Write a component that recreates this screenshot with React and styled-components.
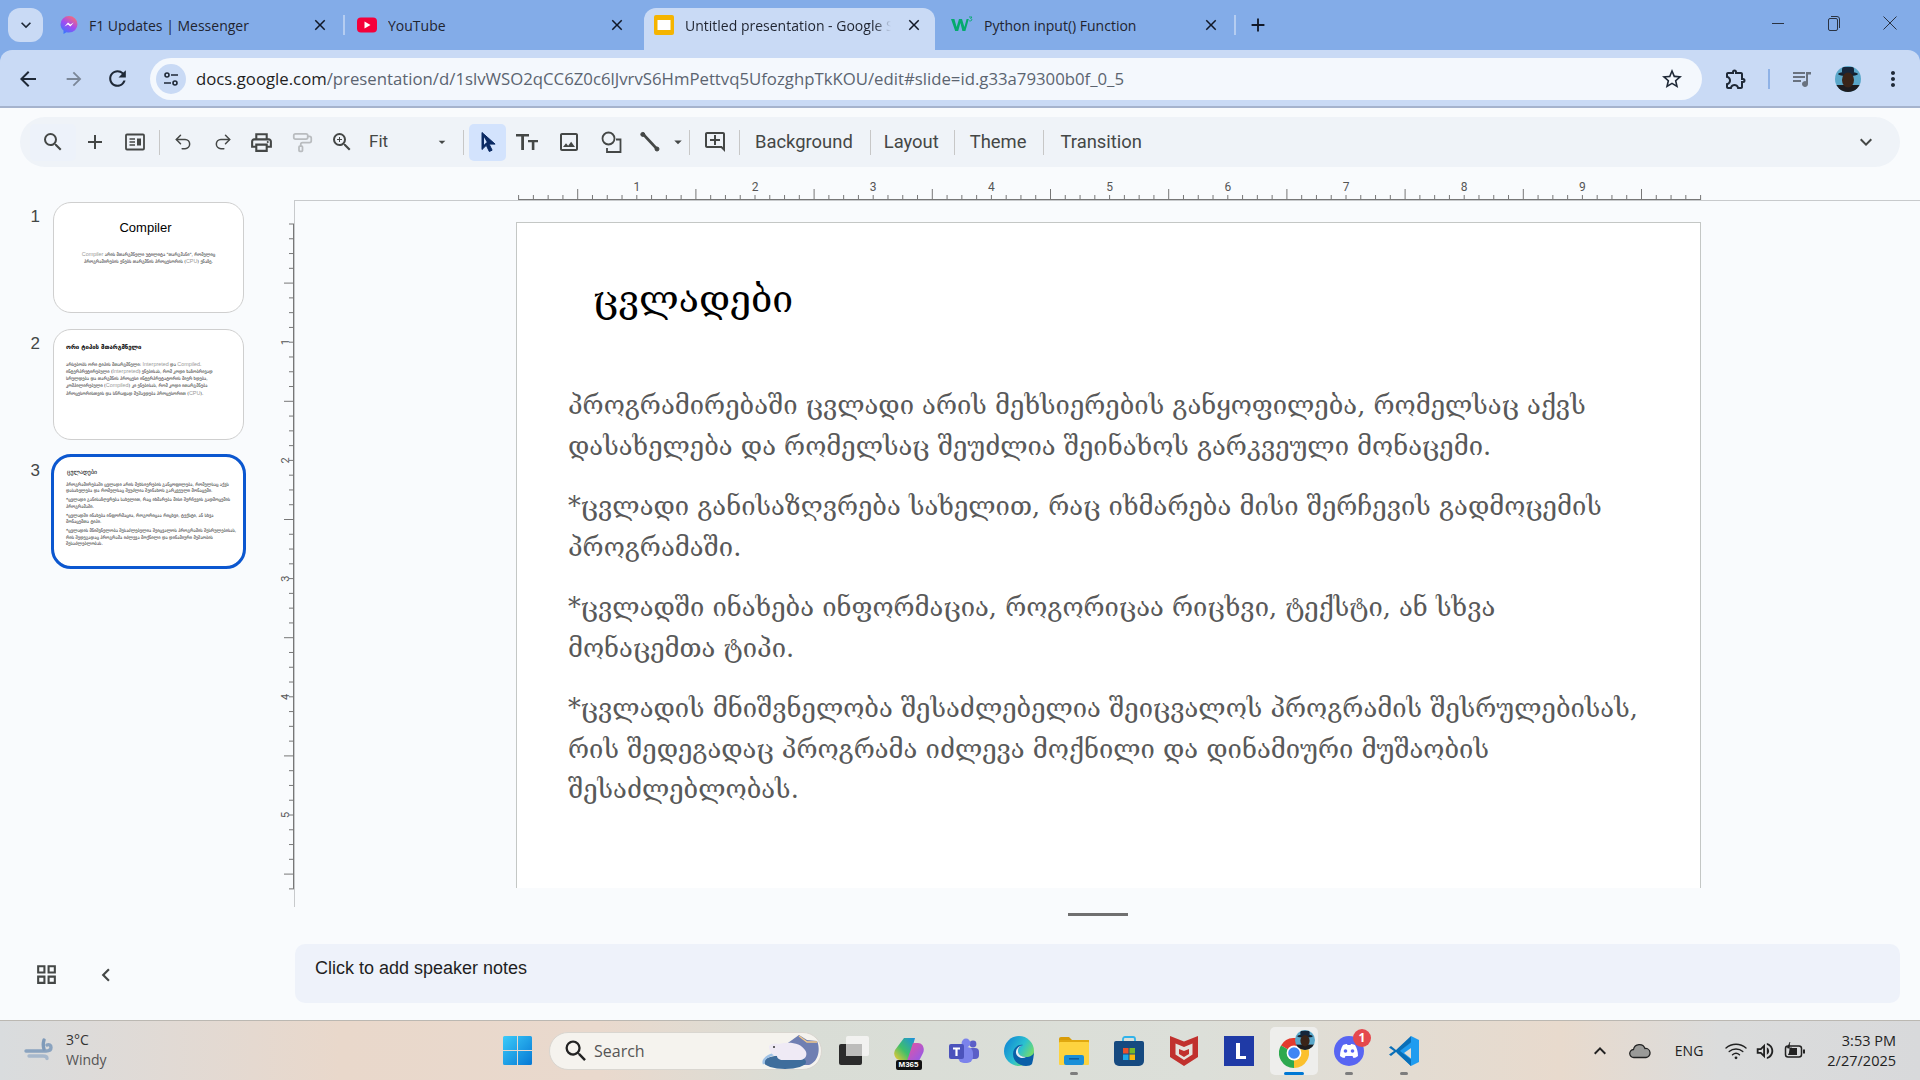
import React from 'react'
import styled, { createGlobalStyle } from 'styled-components'
import {
  MdSearch, MdAdd, MdZoomIn, MdOutlineImage, MdOutlinePrint,
  MdOutlineAddComment, MdExpandMore, MdOutlineGridView, MdChevronLeft, MdStarBorder,
  MdOutlineExtension, MdMoreVert, MdRefresh, MdArrowBack, MdArrowForward, MdArrowDropDown,
  MdClose, MdOutlineVolumeUp, MdKeyboardArrowUp,
} from 'react-icons/md'
import { Undo2, Redo2, PaintRoller } from 'lucide-react'

const UI = `"Open Sans", "Noto Sans", sans-serif`
const GEO = `"DejaVu Serif", "DejaVu Sans", serif`
const GEO_SMALL = `"DejaVu Sans", sans-serif`

const Global = createGlobalStyle`
  html, body { margin: 0; padding: 0; background: #f9fbfd; }
  body { font-family: ${UI}; overflow: hidden; }
  * { box-sizing: border-box; }
`

const Page = styled.div`
  width: 1920px;
  height: 1080px;
  display: flex;
  flex-direction: column;
  overflow: hidden;
`

/* chrome tabs */
const TabBar = styled.div`
  height: 50px;
  flex: none;
  background: #83ace8;
  display: flex;
  align-items: flex-end;
  padding-left: 8px;
`
const TabList = styled.div`
  width: 35px;
  height: 34px;
  margin: 0 7px 8px 0;
  border-radius: 12px;
  background: #c9daf5;
  display: flex;
  align-items: center;
  justify-content: center;
  color: #1f2937;
`
const TabSlot = styled.div`
  position: relative;
  width: 297px;
  height: 42px;
  padding-right: 6px;
  flex: none;
  &::after {
    content: '';
    display: ${p => (p.$sep ? 'block' : 'none')};
    position: absolute;
    right: 2px;
    top: 7px;
    width: 2px;
    height: 20px;
    background: #b5cdf1;
  }
`
const TabShape = styled.div`
  height: 100%;
  display: flex;
  align-items: center;
  padding: 0 9px 8px 10px;
  border-radius: 12px 12px 0 0;
  background: ${p => (p.$active ? '#c9daf5' : 'transparent')};
`
const TabTitle = styled.span`
  flex: 1;
  min-width: 0;
  margin-left: 11px;
  margin-right: ${p => (p.$fade ? 14 : 0)}px;
  font-size: 14px;
  color: #1f2430;
  white-space: nowrap;
  overflow: hidden;
  -webkit-mask-image: ${p => (p.$fade ? 'linear-gradient(90deg, #000 92%, transparent 100%)' : 'none')};
`
const TabClose = styled.span`
  display: flex;
  color: #111827;
  margin-right: 3px;
`
const NewTab = styled.div`
  margin: 0 0 8px 9px;
  height: 34px;
  display: flex;
  align-items: center;
  color: #111827;
`
const WinControls = styled.div`
  margin-left: auto;
  height: 50px;
  display: flex;
  align-items: center;
  align-self: flex-start;
  color: #2a3342;
  padding: 0 2px 4px 0;
`
const WinButton = styled.span`
  width: 56px;
  display: flex;
  justify-content: center;
`

/* address bar */
const AddressBar = styled.div`
  height: 58px;
  flex: none;
  background: #83ace8;
`
const AddressInner = styled.div`
  height: 100%;
  background: #c9daf5;
  border-radius: 12px 12px 0 0;
  border-bottom: 2px solid #a5b3cd;
  display: flex;
  align-items: center;
  padding-top: 1px;
`
const NavBtn = styled.span`
  width: ${p => p.$w || 44}px;
  margin-left: ${p => p.$ml || 0}px;
  display: flex;
  justify-content: center;
  color: ${p => p.$color || '#1f2937'};
  flex: none;
`
const UrlPill = styled.div`
  margin-left: 10px;
  width: 1552px;
  height: 42px;
  border-radius: 21px;
  background: #f4f8fd;
  display: flex;
  align-items: center;
  padding: 0 18px 0 6px;
  flex: none;
`
const SiteChip = styled.span`
  width: 30px;
  height: 30px;
  border-radius: 50%;
  background: #c9daf5;
  display: flex;
  align-items: center;
  justify-content: center;
  flex: none;
`
const UrlText = styled.span`
  margin-left: 10px;
  font-size: 16.76px;
  color: #5b6470;
  white-space: nowrap;
  flex: 1;
  b { font-weight: 400; color: #1f1f1f; }
`
const AddrSep = styled.span`
  width: 2px;
  height: 20px;
  background: #8fb2e6;
  margin: 0 8px;
  flex: none;
`

/* docs toolbar */
const ToolbarWrap = styled.div`
  flex: none;
  padding: 9px 20px 0;
  background: #f9fbfd;
`
const Toolbar = styled.div`
  height: 50px;
  border-radius: 25px;
  background: #eff3f8;
  display: flex;
  align-items: center;
  padding-left: 10px;
  padding-right: 21px;
  color: #444746;
`
const ToolBtn = styled.span`
  width: ${p => p.$w || 40}px;
  height: 37px;
  margin-left: ${p => p.$ml || 0}px;
  flex: none;
  display: flex;
  align-items: center;
  justify-content: center;
  border-radius: 5px;
  color: ${p => p.$color || '#444746'};
  background: ${p => p.$bg || 'transparent'};
`
const ToolSep = styled.span`
  width: 1px;
  height: 25px;
  background: #c7c7c7;
  flex: none;
  margin: 0 ${p => p.$m ?? 4}px;
`
const ZoomLabel = styled.span`
  width: 73px;
  padding: 0 0 2px 8px;
  font-size: 17px;
  font-family: Roboto, ${UI};
  flex: none;
`
const TextBtn = styled.span`
  font-family: Roboto, ${UI};
  font-size: 18.4px;
  padding: 0 ${p => p.$r || 15}px 2px ${p => p.$l || 15}px;
  color: #444746;
  flex: none;
`
const Push = styled.span`
  flex: 1;
`

/* editor */
const Editor = styled.div`
  flex: 1;
  min-height: 0;
  display: grid;
  grid-template-columns: 280px 1fr;
  background: #f9fbfd;
`
const Filmstrip = styled.div`
  display: flex;
  flex-direction: column;
  padding-top: 35px;
`
const ThumbRow = styled.div`
  display: flex;
  height: 111px;
  margin-bottom: ${p => (p.$last ? 0 : 16)}px;
`
const ThumbNum = styled.span`
  width: 40px;
  text-align: right;
  font: 17px "Liberation Sans", sans-serif;
  color: #444746;
  margin-top: 5px;
`
const Thumb = styled.div`
  margin-left: 13px;
  width: 191px;
  height: 111px;
  border-radius: 18px;
  background: #fff;
  border: 1px solid #cfcfcf;
  overflow: hidden;
  outline: ${p => (p.$active ? '3px solid #0b57d0' : 'none')};
  outline-offset: -1px;
  padding: ${p => p.$pad || '11px 12px'};
`
const ThumbTitle = styled.div`
  font-family: ${p => (p.$latin ? '"Liberation Sans"' : GEO_SMALL)}, sans-serif;
  font-size: ${p => p.$size || 6}px;
  font-weight: ${p => p.$weight || 400};
  color: #000;
  text-align: ${p => (p.$center ? 'center' : 'left')};
  line-height: ${p => p.$lh || 12}px;
  margin: ${p => p.$m || '0 0 8px 0'};
  white-space: nowrap;
`
const ThumbLine = styled.div`
  font-family: ${GEO_SMALL};
  font-size: 4.4px;
  line-height: 6.4px;
  color: #222;
  white-space: nowrap;
  text-align: ${p => (p.$center ? 'center' : 'left')};
  margin-bottom: ${p => p.$mb || 0}px;
  i { font-style: normal; font-family: "Liberation Sans", sans-serif; font-size: 5.4px; color: #999; }
`
const FilmFooter = styled.div`
  margin-top: auto;
  height: 94px;
  display: flex;
  align-items: flex-start;
  padding: 36px 0 0 34px;
  color: #444746;
  gap: 34px;
`

const MainCol = styled.div`
  display: flex;
  flex-direction: column;
  min-width: 0;
`
const CanvasGrid = styled.div`
  display: grid;
  grid-template-columns: 14px 1fr;
  grid-template-rows: 33px 707px;
`
const Canvas = styled.div`
  border-top: 1.5px solid #c8cacc;
  border-left: 1.5px solid #c8cacc;
  padding: 21px 0 0 221px;
  overflow: hidden;
`
const Slide = styled.div`
  width: 1185px;
  height: 666px;
  background: #fff;
  border: 1.5px solid #c4c7c5;
  border-bottom: 0;
  overflow: hidden;
`
const SlideTitle = styled.h1`
  margin: 46px 0 56px 76px;
  font-family: ${GEO};
  font-weight: 400;
  font-size: 37.3px;
  line-height: 60px;
  color: #000;
`
const SlideBody = styled.div`
  margin-left: 51px;
  font-family: ${GEO};
  font-size: 25.6px;
  line-height: 40.5px;
  color: #595959;
`
const SlidePara = styled.p`
  margin: 0 0 20px;
  white-space: pre;
`
const NotesHandle = styled.div`
  width: 60px;
  height: 2.5px;
  margin: 6px auto 0;
  background: #707070;
  position: relative;
  left: -2px;
`
const Notes = styled.div`
  margin: 28px 20px 0 15px;
  height: 59px;
  border-radius: 10px;
  background: #eef2fa;
  padding: 12px 0 0 20px;
  font: 18px/24px "Liberation Sans", sans-serif;
  color: #1f1f1f;
`

/* taskbar */
const Taskbar = styled.div`
  flex: none;
  height: 60px;
  border-top: 1.5px solid #bbb8b2;
  background: linear-gradient(90deg, #d9dcde 0, #e9d8cb 340px, #e9d9cd 600px, #d9ddd6 800px, #dcdfd9 1200px, #e8dacd 1560px, #dbdcdc 1720px, #d8d9db 1920px);
  display: flex;
  align-items: center;
`
const Weather = styled.div`
  width: 503px;
  flex: none;
  display: flex;
  align-items: center;
  padding-left: 24px;
  gap: 10px;
  margin-top: -2px;
`
const WeatherText = styled.div`
  font-size: 14px;
  line-height: 20px;
  color: #333;
  span { display: block; color: #555; }
`
const SearchPill = styled.div`
  width: 273px;
  height: 38px;
  margin-left: 17px;
  flex: none;
  border-radius: 19px;
  background: #f5f3ee;
  border: 1px solid #d9d6d0;
  display: flex;
  align-items: center;
  padding-left: 12px;
  color: #555;
  font-size: 16px;
  gap: 4px;
`
const Bear = styled.svg`
  margin-left: auto;
`
const AppsRow = styled.div`
  display: flex;
  margin-left: 4px;
  flex: none;
`
const AppSlot = styled.div`
  width: 55px;
  height: 48px;
  display: flex;
  align-items: center;
  justify-content: center;
  position: relative;
  border-radius: 5px;
  &::before {
    content: '';
    display: ${p => (p.$focus ? 'block' : 'none')};
    position: absolute;
    left: 4px; right: 3px; top: 0; bottom: 0;
    background: #eeeeec;
    border-radius: 5px;
  }
  &::after {
    content: '';
    display: ${p => (p.$dot || p.$focus ? 'block' : 'none')};
    position: absolute;
    bottom: 0;
    left: 50%;
    transform: translateX(-50%);
    width: ${p => (p.$focus ? 20 : 8)}px;
    height: 3px;
    border-radius: 2px;
    background: ${p => (p.$focus ? '#0078d4' : '#7d7d7d')};
  }
  > * { position: relative; }
`
const Tray = styled.div`
  margin-left: auto;
  display: flex;
  align-items: center;
  color: #222;
  padding-right: 24px;
`
const TrayItem = styled.span`
  display: flex;
  margin-left: ${p => p.$ml || 0}px;
  font-size: 14px;
`
const Clock = styled.div`
  margin-left: 21px;
  text-align: right;
  font-size: 14.5px;
  line-height: 20px;
  color: #222;
  white-space: nowrap;
`

/* drawings */
const HRuler = () => {
  const step = 118.2 / 8
  const x0 = 224.6
  const ticks = []
  for (let i = 0; i <= 80; i++) {
    const half = i % 8 === 4
    ticks.push(<line key={i} x1={x0 + i * step} x2={x0 + i * step} y1={half ? 22 : 28} y2={33} stroke="#777" />)
  }
  const labels = [1, 2, 3, 4, 5, 6, 7, 8, 9]
  return (
    <svg width="1626" height="33">
      <line x1={x0} x2={x0 + 80 * step} y1="32.5" y2="32.5" stroke="#777" />
      {ticks}
      {labels.map(n => (
        <text key={n} x={x0 + n * 118.2} y="24" textAnchor="middle" fontSize="12" fontFamily="Roboto, sans-serif" fill="#555">{n}</text>
      ))}
    </svg>
  )
}

const VRuler = () => {
  const step = 118.2 / 8
  const y0 = 24
  const ticks = []
  for (let i = 0; i <= 45; i++) {
    const half = i % 8 === 4
    ticks.push(<line key={i} y1={y0 + i * step} y2={y0 + i * step} x1={half ? 4 : 9} x2={14} stroke="#777" />)
  }
  return (
    <svg width="14" height="707">
      <line x1="13.500" x2="13.500" y1={y0} y2={y0 + 45 * step} stroke="#777" />
      {ticks}
      {[1, 2, 3, 4, 5].map(n => (
        <text key={n} x="0" y="0" transform={`translate(9 ${y0 + n * 118.2}) rotate(-90)`} textAnchor="middle" fontSize="11" fontFamily="Roboto, sans-serif" fill="#555">{n}</text>
      ))}
    </svg>
  )
}

const Messenger = () => (
  <svg width="18" height="20" viewBox="0 0 18 20">
    <defs>
      <linearGradient id="msg" x1="0.2" y1="1" x2="0.8" y2="0">
        <stop offset="0" stopColor="#2f7bff" /><stop offset="0.5" stopColor="#a24bf2" /><stop offset="1" stopColor="#ff6d6d" />
      </linearGradient>
    </defs>
    <path d="M9 1a8.500 8.300 0 0 0-8.500 8.300c0 2.600 1 4.600 3 6.100V19l3-1.700c.8.2 1.600.3 2.500.3a8.500 8.300 0 0 0 0-16.600z" fill="url(#msg)" />
    <path d="M4.500 11.600 8 7.600l2.400 2 3.300-2.200-3.300 4.200-2.400-2z" fill="#fff" />
  </svg>
)
const YouTube = () => (
  <svg width="20" height="16" viewBox="0 0 20 16">
    <rect width="20" height="15" y="0.5" rx="4" fill="#f4003a" />
    <path d="M7.500 4.500v7l6-3.500z" fill="#fff" />
  </svg>
)
const SlidesIcon = () => (
  <svg width="20" height="20" viewBox="0 0 20 20">
    <rect width="20" height="20" rx="2" fill="#f5b400" />
    <rect x="3.500" y="5" width="13" height="10" fill="#fff" />
  </svg>
)
const W3 = () => (
  <svg width="22" height="18" viewBox="0 0 22 18">
    <path d="M0 3h3.400l2.200 8 2.400-8h3l2.400 8 2.200-8h2.200l-3.400 12h-3L9.400 7l-2.200 8h-3z" fill="#04aa6d" />
    <path d="M18 1h3l-1.400 1.500c1 .2 1.400.8 1.200 1.500-.2.8-1.400 1.200-2.600.8" fill="none" stroke="#04aa6d" strokeWidth="0.9" />
  </svg>
)
const Tune = () => (
  <svg width="18" height="18" viewBox="0 0 18 18" fill="none" stroke="#1f2937" strokeWidth="1.600">
    <circle cx="5" cy="5" r="2" /><path d="M9 5h7M2 13h7" /><circle cx="13" cy="13" r="2" />
  </svg>
)
const QueueMusic = () => (
  <svg width="24" height="24" viewBox="0 0 24 24" fill="#69727f">
    <rect x="3" y="5" width="12" height="2" /><rect x="3" y="9" width="12" height="2" /><rect x="3" y="13" width="8" height="2" />
    <path d="M16 5h5v2.500h-3V17a3 3 0 1 1-2-2.800z" />
  </svg>
)
const Avatar = ({ size = 26, id = 'a' }) => (
  <svg width={size} height={size} viewBox="0 0 26 26">
    <defs><clipPath id={id}><circle cx="13" cy="13" r="13" /></clipPath></defs>
    <g clipPath={`url(#${id})`}>
      <rect width="26" height="26" fill="#5aa7c9" />
      <rect y="19" width="26" height="7" fill="#1d1c1f" />
      <ellipse cx="13" cy="8" rx="10" ry="2.200" fill="#14202e" />
      <rect x="7" y="1" width="12" height="7" rx="2" fill="#16263a" />
      <ellipse cx="13" cy="14" rx="6" ry="7.500" fill="#3a2418" />
    </g>
  </svg>
)
const Minimize = () => (<svg width="12" height="12"><path d="M0 6.500h12" stroke="#2a3342" /></svg>)
const Restore = () => (
  <svg width="14" height="18" viewBox="0 0 14 18" fill="none" stroke="#2a3342">
    <rect x="1.500" y="4.500" width="9" height="12" rx="1.500" /><path d="M4 2.500h6a2.500 2.500 0 0 1 2.500 2.500v9" />
  </svg>
)
const WinClose = () => (<svg width="14" height="14"><path d="M0.500 0.500l13 13M13.500 0.500l-13 13" stroke="#2a3342" /></svg>)
const Pointer = () => (
  <svg width="20" height="24" viewBox="0 0 20 24">
    <path d="M4 2.500v17l4.300-4.200 3 6.200 2.800-1.300-3-6.100h6z" fill="#0b2a63" stroke="#0b2a63" strokeLinejoin="round" />
    <path d="M6 7.300v7.400l2.800-2.700.5 1" fill="#d3e3fd" />
  </svg>
)
const TextTool = () => (
  <svg width="24" height="20" viewBox="0 0 24 20" fill="#444746">
    <path d="M1 2h13v2.600H9V18H6.200V4.600H1z" /><path d="M13 8h10v2.200h-3.600V18h-2.600v-7.800H13z" />
  </svg>
)
const ShapeTool = () => (
  <svg width="24" height="24" viewBox="0 0 24 24" fill="none" stroke="#444746" strokeWidth="1.800">
    <circle cx="9.500" cy="8.500" r="6" /><path d="M17 9.500h4.500V22H8v-4" />
  </svg>
)
const LineTool = () => (
  <svg width="22" height="22" viewBox="0 0 22 22" fill="#444746" stroke="#444746">
    <path d="M4 3l14 15" strokeWidth="2.600" /><circle cx="3.800" cy="3.400" r="2" /><circle cx="18" cy="18" r="2" />
  </svg>
)
const NewSlide = () => (
  <svg width="22" height="20" viewBox="0 0 22 20" fill="none" stroke="#444746" strokeWidth="1.800">
    <rect x="2" y="2.500" width="18" height="15" rx="1" /><path d="M5.500 7h5.500M5.500 10h5.500M5.500 13h5.500" strokeWidth="1.600" /><rect x="13" y="6.500" width="4" height="7" fill="#444746" stroke="none" />
  </svg>
)
const WindIcon = () => (
  <svg width="32" height="24" viewBox="0 0 32 24" fill="none" strokeLinecap="round">
    <path d="M2 13h20c3 0 5-1 5-3.500S25 6 23 7" stroke="#8aa3bf" strokeWidth="3.400" />
    <path d="M5 18h14c3 0 4 1 4 2.500" stroke="#a7b8cc" strokeWidth="3.400" />
    <path d="M20 2c-1 3-1 6 0 9" stroke="#7e9ab9" strokeWidth="3.400" />
  </svg>
)
const WinLogo = () => (
  <svg width="29" height="29" viewBox="0 0 29 29">
    <defs><linearGradient id="wl" x1="0" y1="0" x2="1" y2="1"><stop offset="0" stopColor="#3ccbf9" /><stop offset="1" stopColor="#0678d4" /></linearGradient></defs>
    <path d="M0 1.500a1.500 1.500 0 0 1 1.500-1.500H14v14H0zM15 0h12.500A1.500 1.500 0 0 1 29 1.500V14H15zM0 15h14v14H1.500A1.500 1.500 0 0 1 0 27.500zM15 15h14v12.500a1.500 1.500 0 0 1-1.500 1.500H15z" fill="url(#wl)" />
  </svg>
)
const BearArt = () => (
  <Bear width="66" height="36" viewBox="0 0 66 36">
    <path d="M30 12 44 2l8 5 10 1c3 6 3 20-8 24H30z" fill="#6f7fb2" />
    <path d="M44 3l8 6 10 0" stroke="#f2c98a" fill="none" strokeWidth="1.400" />
    <ellipse cx="30" cy="29" rx="21" ry="7" fill="#3f6d9c" />
    <path d="M9 31c-2-5 4-9 14-11" stroke="#9fc2e6" strokeWidth="2.400" fill="none" />
    <path d="M14 13c3-3 7-3 10-2 10-3 22-1 26 6 3 4 1 9-4 10H28c-4 0-6-2-6-4-4 0-8-4-8-10z" fill="#efeaf5" />
    <circle cx="19" cy="14" r="1" fill="#333" />
  </Bear>
)
const TaskView = () => (
  <svg width="30" height="30" viewBox="0 0 30 30">
    <rect x="7" y="0" width="23" height="20" rx="2" fill="#f2f2f0" />
    <rect y="8" width="23" height="21" rx="2" fill="#2b2b2b" />
    <rect x="7" y="8" width="16" height="12" fill="#bdbdbb" />
  </svg>
)
const CopilotBadge = styled.span`
  position: absolute;
  left: 50%;
  bottom: 5px;
  transform: translateX(-50%);
  background: #111;
  color: #fff;
  font: 700 8px/10px "Liberation Sans", sans-serif;
  padding: 0 3px;
  border-radius: 2px;
`
const Copilot = () => (
  <svg width="30" height="28" viewBox="0 0 30 28">
    <defs>
      <linearGradient id="cp1" x1="0" y1="1" x2="1" y2="0"><stop offset="0" stopColor="#f7c92e" /><stop offset="0.45" stopColor="#3fbf6b" /><stop offset="1" stopColor="#1c8fe0" /></linearGradient>
      <linearGradient id="cp2" x1="0" y1="0" x2="1" y2="1"><stop offset="0" stopColor="#e8539e" /><stop offset="1" stopColor="#8b5cf0" /></linearGradient>
    </defs>
    <path d="M10 1h11l-6 22H6C1 23-1 17 1 13z" fill="url(#cp1)" />
    <path d="M19 6h5c5 0 7 6 5 10l-4 8H13z" fill="url(#cp2)" />
  </svg>
)
const Teams = () => (
  <svg width="30" height="26" viewBox="0 0 30 26">
    <circle cx="24" cy="6" r="3.400" fill="#5b5fc7" />
    <circle cx="17" cy="5" r="4.400" fill="#7b83eb" />
    <rect x="19" y="10" width="11" height="11" rx="4" fill="#5b5fc7" />
    <rect x="9" y="9" width="15" height="16" rx="6" fill="#7b83eb" />
    <rect y="6" width="15" height="15" rx="2" fill="#4b53bc" />
    <path d="M4 9.500h7v2H8.600V18H6.400v-6.500H4z" fill="#fff" />
  </svg>
)
const Edge = () => (
  <svg width="30" height="30" viewBox="0 0 30 30">
    <defs>
      <linearGradient id="eg" x1="0" y1="0" x2="1" y2="0.6"><stop offset="0" stopColor="#0c7cd5" /><stop offset="0.6" stopColor="#2ac0d0" /><stop offset="1" stopColor="#7ee05e" /></linearGradient>
    </defs>
    <circle cx="15" cy="15" r="15" fill="url(#eg)" />
    <path d="M30 15c0 4-4 6-8 6-5 0-8-3-8-6 0-3 3-5 5-6-5-1-10 3-10 9 0 7 6 12 13 12 3 0 5-1 6-2 1-3 2-9 2-13z" fill="#0a5fa8" />
    <path d="M14 15c0 3 3 6 8 6-3 2-9 1-10-4-.5-3 2-7 7-8-3 1-5 3-5 6z" fill="#e6eef2" />
  </svg>
)
const Folder = () => (
  <svg width="30" height="28" viewBox="0 0 30 28">
    <path d="M0 2a2 2 0 0 1 2-2h8l3 3h-13z" fill="#d99c07" />
    <rect y="3" width="30" height="4" fill="#e0a80f" />
    <rect y="5" width="30" height="23" rx="1" fill="#fdd33f" />
    <rect x="5" y="18" width="20" height="10" rx="2" fill="#1a8fd8" />
    <rect x="10" y="21" width="10" height="1.600" fill="#0b5da0" />
  </svg>
)
const Store = () => (
  <svg width="30" height="30" viewBox="0 0 30 30">
    <path d="M9 6V3a2 2 0 0 1 2-2h8a2 2 0 0 1 2 2v3" fill="none" stroke="#31b3ea" strokeWidth="1.800" />
    <path d="M0 7a2 2 0 0 1 2-2h26a2 2 0 0 1 2 2v18a5 5 0 0 1-5 5H5a5 5 0 0 1-5-5z" fill="#164a80" />
    <rect x="9" y="12" width="5.500" height="5.500" fill="#e9512c" /><rect x="15.500" y="12" width="5.500" height="5.500" fill="#79b92a" />
    <rect x="9" y="18.500" width="5.500" height="5.500" fill="#1da8e8" /><rect x="15.500" y="18.500" width="5.500" height="5.500" fill="#fbb90d" />
  </svg>
)
const McAfee = () => (
  <svg width="28" height="30" viewBox="0 0 28 30">
    <path d="M0 0l14 5.500L28 0v21l-14 9-14-9z" fill="#c1312e" />
    <path d="M5.500 7.500l8.500 3.500 8.500-3.500v11l-8.500 5.500-8.500-5.500z" fill="#e4e2dc" />
    <path d="M9 13v5l5 3 5-3v-5l-5 2z" fill="#c1312e" />
  </svg>
)
const LogoL = () => (
  <svg width="30" height="30" viewBox="0 0 30 30">
    <rect width="30" height="30" fill="#1f3aa6" />
    <path d="M12 7h4v13h6v3H12z" fill="#fff" />
  </svg>
)
const ChromeWrap = styled.span`
  display: block;
  width: 30px;
  height: 30px;
  margin-top: 4px;
  margin-left: 1px;
`
const ChromeAvatar = styled.span`
  position: absolute;
  top: 3px;
  left: 29px;
  display: flex;
`
const Chrome = () => (
  <ChromeWrap>
    <svg width="30" height="30" viewBox="0 0 30 30">
      <path d="M15 15 2 7.500A15 15 0 0 1 28 7.500z" fill="#e33b2e" />
      <path d="M15 15 2 7.500A15 15 0 0 0 15 30z" fill="#2da94f" />
      <path d="M15 15 28 7.500A15 15 0 0 1 15 30z" fill="#fbc02d" />
      <circle cx="15" cy="15" r="7.400" fill="#fff" />
      <circle cx="15" cy="15" r="5.800" fill="#3f86f4" />
    </svg>
  </ChromeWrap>
)
const Discord = () => (
  <svg width="30" height="30" viewBox="0 0 30 30">
    <circle cx="15" cy="15" r="15" fill="#5865f2" />
    <path d="M9 9c2-1 3-1 4-1l.5 1h3l.5-1c1 0 2 0 4 1 2 3 3 7 3 11-1.500 1-3 2-4.500 2l-1-2h-7l-1 2c-1.500 0-3-1-4.500-2 0-4 1-8 3-11z" fill="#fff" />
    <circle cx="11.500" cy="15" r="1.800" fill="#5865f2" /><circle cx="18.500" cy="15" r="1.800" fill="#5865f2" />
  </svg>
)
const Badge = styled.span`
  position: absolute;
  top: 2px;
  left: 32px;
  width: 18px;
  height: 18px;
  border-radius: 50%;
  background: #e5484d;
  color: #fff;
  font: 700 12px/18px ${UI};
  text-align: center;
`
const VSCode = () => (
  <svg width="30" height="30" viewBox="0 0 30 30">
    <path d="M22 0l8 4v22l-8 4-14-13 14-11v6l-7 5 7 5.500z" fill="#1f9cf0" />
    <path d="M22 0 7 14 2 10 0 11.500 5 15l-5 3.500L2 20l5-4 15 14 0-6.500L11 15 22 6.500z" fill="#0a6fb8" />
  </svg>
)
const TrayCloud = () => (
  <svg width="22" height="16" viewBox="0 0 22 16" fill="#9a9a98" stroke="#222" strokeWidth="1.300">
    <path d="M5 14.500a4 4 0 0 1-.5-8 6 6 0 0 1 11.500-1 4.500 4.500 0 0 1 1 9z" />
  </svg>
)
const Wifi = () => (
  <svg width="22" height="18" viewBox="0 0 22 18" fill="none" stroke="#222" strokeWidth="1.400" strokeLinecap="round">
    <path d="M1 6c5.500-5 14.500-5 20 0M4.200 9.500c3.800-3.400 9.800-3.400 13.600 0M7.500 12.800c2-1.700 5-1.700 7 0" />
    <circle cx="11" cy="15.800" r="1.400" fill="#222" stroke="none" />
  </svg>
)
const Battery = () => (
  <svg width="22" height="20" viewBox="0 0 22 20" fill="none" stroke="#222" strokeWidth="1.500">
    <rect x="1.500" y="5" width="16" height="11" rx="2.500" /><path d="M20 8.500v4" strokeWidth="2" />
    <path d="M4 14 7 7h6v7z" fill="#222" stroke="none" /><path d="M6 1 3.500 7H8l-3 7" fill="#222" strokeWidth="0.8" />
  </svg>
)

const slideParas = [
  ['პროგრამირებაში ცვლადი არის მეხსიერების განყოფილება, რომელსაც აქვს', 'დასახელება და რომელსაც შეუძლია შეინახოს გარკვეული მონაცემი.'],
  ['*ცვლადი განისაზღვრება სახელით, რაც იხმარება მისი შერჩევის გადმოცემის', 'პროგრამაში.'],
  ['*ცვლადში ინახება ინფორმაცია, როგორიცაა რიცხვი, ტექსტი, ან სხვა', 'მონაცემთა ტიპი.'],
  ['*ცვლადის მნიშვნელობა შესაძლებელია შეიცვალოს პროგრამის შესრულებისას,', 'რის შედეგადაც პროგრამა იძლევა მოქნილი და დინამიური მუშაობის', 'შესაძლებლობას.'],
]

const tabs = [
  { id: 1, title: 'F1 Updates | Messenger', icon: <Messenger />, sep: true },
  { id: 2, title: 'YouTube', icon: <YouTube /> },
  { id: 3, title: 'Untitled presentation - Google Slides', icon: <SlidesIcon />, active: true, fade: true },
  { id: 4, title: 'Python input() Function', icon: <W3 />, sep: true },
]

export default function App() {
  return (
    <Page>
      <Global />
      <TabBar>
        <TabList><MdExpandMore size={20} /></TabList>
        {tabs.map(t => (
          <TabSlot key={t.id} $sep={t.sep}>
            <TabShape $active={t.active}>
              {t.icon}
              <TabTitle $fade={t.fade}>{t.title}</TabTitle>
              <TabClose><MdClose size={18} /></TabClose>
            </TabShape>
          </TabSlot>
        ))}
        <NewTab><MdAdd size={22} /></NewTab>
        <WinControls>
          <WinButton><Minimize /></WinButton>
          <WinButton><Restore /></WinButton>
          <WinButton><WinClose /></WinButton>
        </WinControls>
      </TabBar>

      <AddressBar>
        <AddressInner>
          <NavBtn $w={52} $ml={2}><MdArrowBack size={24} /></NavBtn>
          <NavBtn $w={40} $color="#7b8798"><MdArrowForward size={22} /></NavBtn>
          <NavBtn $w={46}><MdRefresh size={25} /></NavBtn>
          <UrlPill>
            <SiteChip><Tune /></SiteChip>
            <UrlText><b>docs.google.com</b>/presentation/d/1slvWSO2qCC6Z0c6lJvrvS6HmPettvq5UfozghpTkKOU/edit#slide=id.g33a79300b0f_0_5</UrlText>
            <MdStarBorder size={24} color="#1f2937" />
          </UrlPill>
          <NavBtn $w={48} $ml={10}><MdOutlineExtension size={24} /></NavBtn>
          <AddrSep />
          <NavBtn $w={48}><QueueMusic /></NavBtn>
          <NavBtn $w={44}><Avatar id="av1" /></NavBtn>
          <NavBtn $w={46}><MdMoreVert size={24} /></NavBtn>
        </AddressInner>
      </AddressBar>

      <ToolbarWrap>
        <Toolbar>
          <ToolBtn $w={46} $bg="#edf2fa"><MdSearch size={24} /></ToolBtn>
          <ToolBtn $w={38}><MdAdd size={24} /></ToolBtn>
          <ToolBtn $w={42}><NewSlide /></ToolBtn>
          <ToolSep $m={3} />
          <ToolBtn><Undo2 size={20} strokeWidth={1.8} /></ToolBtn>
          <ToolBtn $w={39}><Redo2 size={20} strokeWidth={1.8} /></ToolBtn>
          <ToolBtn $w={39}><MdOutlinePrint size={25} /></ToolBtn>
          <ToolBtn $w={42}><PaintRoller size={21} color="#b9bcbf" /></ToolBtn>
          <ToolBtn $w={38}><MdZoomIn size={24} /></ToolBtn>
          <ZoomLabel>Fit</ZoomLabel>
          <ToolBtn $w={16}><MdArrowDropDown size={22} /></ToolBtn>
          <ToolSep $m={13} />
          <ToolBtn $w={37} $ml={-8} $bg="#d3e3fd"><Pointer /></ToolBtn>
          <ToolBtn $w={41}><TextTool /></ToolBtn>
          <ToolBtn $w={43}><MdOutlineImage size={24} /></ToolBtn>
          <ToolBtn $w={41}><ShapeTool /></ToolBtn>
          <ToolBtn $w={38}><LineTool /></ToolBtn>
          <ToolBtn $w={18}><MdArrowDropDown size={22} /></ToolBtn>
          <ToolSep $m={2} />
          <ToolBtn $w={46}><MdOutlineAddComment size={24} /></ToolBtn>
          <ToolSep $m={1} />
          <TextBtn $l={14} $r={17}>Background</TextBtn>
          <ToolSep $m={0} />
          <TextBtn $l={13} $r={15}>Layout</TextBtn>
          <ToolSep $m={0} />
          <TextBtn $l={15} $r={17}>Theme</TextBtn>
          <ToolSep $m={0} />
          <TextBtn $l={16}>Transition</TextBtn>
          <Push />
          <ToolBtn $w={26}><MdExpandMore size={24} /></ToolBtn>
        </Toolbar>
      </ToolbarWrap>

      <Editor>
        <Filmstrip>
          <ThumbRow>
            <ThumbNum>1</ThumbNum>
            <Thumb $pad="14px 12px">
              <ThumbTitle $latin $size={13} $center $m="5px 0 17px -6px">Compiler</ThumbTitle>
              <ThumbLine $center><i>Compiler</i> არის მთარგმნელი უტილიტა "თარგმანი", რომელიც</ThumbLine>
              <ThumbLine $center>პროგრამირების ენებს თარგმნის პროცესორის (<i>CPU</i>) ენაზე.</ThumbLine>
            </Thumb>
          </ThumbRow>
          <ThumbRow>
            <ThumbNum>2</ThumbNum>
            <Thumb>
              <ThumbTitle $weight={700} $size={6}>ორი ტიპის მთარგმნელი</ThumbTitle>
              <ThumbLine>არსებობს ორი ტიპის მთარგმნელი: <i>Interpreted</i> და <i>Compiled</i>.</ThumbLine>
              <ThumbLine>ინტერპრეტირებული (<i>Interpreted</i>) ენებისას, რომ კოდი ხაზობრივად</ThumbLine>
              <ThumbLine>სრულდება და თარგმნის პროცესი ინტერპრეტატორის მიერ ხდება,</ThumbLine>
              <ThumbLine>კომპილირებული (<i>Compiled</i>) კი ენებისას, რომ კოდი ითარგმნება</ThumbLine>
              <ThumbLine>პროცესორისთვის და სწრაფად მუშავდება პროცესორით (<i>CPU</i>).</ThumbLine>
            </Thumb>
          </ThumbRow>
          <ThumbRow $last>
            <ThumbNum>3</ThumbNum>
            <Thumb $active>
              <ThumbTitle $size={6} $m="-2px 0 4px 1px">ცვლადები</ThumbTitle>
              {slideParas.map(p => p.map((l, i) => (
                <ThumbLine key={l} $mb={i === p.length - 1 ? 2.6 : 0}>{l}</ThumbLine>
              )))}
            </Thumb>
          </ThumbRow>
          <FilmFooter>
            <MdOutlineGridView size={25} />
            <MdChevronLeft size={26} />
          </FilmFooter>
        </Filmstrip>

        <MainCol>
          <CanvasGrid>
            <span />
            <HRuler />
            <VRuler />
            <Canvas>
              <Slide>
                <SlideTitle>ცვლადები</SlideTitle>
                <SlideBody>
                  {slideParas.map(p => (
                    <SlidePara key={p[0]}>{p.join('\n')}</SlidePara>
                  ))}
                </SlideBody>
              </Slide>
            </Canvas>
          </CanvasGrid>
          <NotesHandle />
          <Notes>Click to add speaker notes</Notes>
        </MainCol>
      </Editor>

      <Taskbar>
        <Weather>
          <WindIcon />
          <WeatherText>3°C<span>Windy</span></WeatherText>
        </Weather>
        <WinLogo />
        <SearchPill>
          <MdSearch size={28} color="#222" />
          Search
          <BearArt />
        </SearchPill>
        <AppsRow>
          <AppSlot><TaskView /></AppSlot>
          <AppSlot><Copilot /><CopilotBadge>M365</CopilotBadge></AppSlot>
          <AppSlot><Teams /></AppSlot>
          <AppSlot><Edge /></AppSlot>
          <AppSlot $dot><Folder /></AppSlot>
          <AppSlot><Store /></AppSlot>
          <AppSlot><McAfee /></AppSlot>
          <AppSlot><LogoL /></AppSlot>
          <AppSlot $focus><Chrome /><ChromeAvatar><Avatar size={20} id="av2" /></ChromeAvatar></AppSlot>
          <AppSlot $dot><Discord /><Badge>1</Badge></AppSlot>
          <AppSlot $dot><VSCode /></AppSlot>
        </AppsRow>
        <Tray>
          <TrayItem><MdKeyboardArrowUp size={24} /></TrayItem>
          <TrayItem $ml={17}><TrayCloud /></TrayItem>
          <TrayItem $ml={24}>ENG</TrayItem>
          <TrayItem $ml={22}><Wifi /></TrayItem>
          <TrayItem $ml={7}><MdOutlineVolumeUp size={22} /></TrayItem>
          <TrayItem $ml={8}><Battery /></TrayItem>
          <Clock>3:53 PM<br />2/27/2025</Clock>
        </Tray>
      </Taskbar>
    </Page>
  )
}
